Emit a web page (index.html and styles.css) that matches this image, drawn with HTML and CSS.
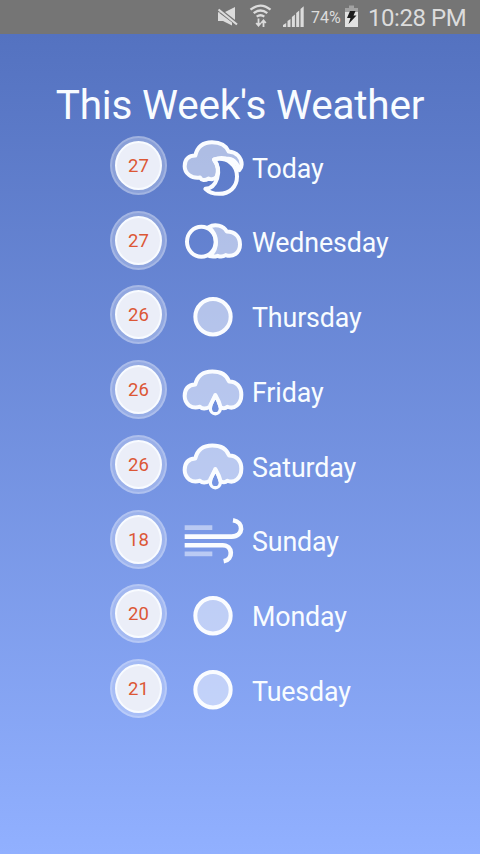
FILE: index.html
```html
<!DOCTYPE html>
<html lang="en">
<head>
<meta charset="utf-8">
<title>This Week's Weather</title>
<link rel="stylesheet" href="styles.css">
</head>
<body>
<header class="status">
  <svg class="status-icons" viewBox="0 0 110 33" width="110" height="33">
    <g fill="#dcdcdc">
      <path d="M2 12h7l10-5v15.500L6 13z"/><path d="M2 12v9h5l9 4.500v-3z"/>
      <path d="M2 8.500L21.500 24" stroke="#757575" stroke-width="3.500"/>
      <path d="M2.500 9.500L21 24.500" stroke="#dcdcdc" stroke-width="2.200"/>
      <path d="M67 27v-2l3.200-2v4zM71.500 27v-6l3-2v8zM75.900 27v-10l3-2.500V27zM80.200 27V13l3-2.500V27zM84.500 27V9l3.200-2.700V27z"/>
    </g>
    <g fill="none" stroke="#dcdcdc" stroke-width="2.300">
      <path d="M34.500 9.700Q44.500 1.500 54.500 9.700M37.700 13.200Q44.500 7.800 51.300 13.200M40.700 16.700Q44.500 13.800 48.300 16.700"/>
      <path d="M42.500 18.500v7M40.200 23l2.300 2.700 2.300-2.700M47.500 27v-6.500M45.200 23l2.300-2.700 2.300 2.700" stroke-width="1.800"/>
    </g>
  </svg>
  <span class="percent">74%</span>
  <svg class="battery" viewBox="0 0 14 33" width="14" height="33">
    <path d="M1 8.500h13V27H1z" fill="#e2e2e2"/><path d="M5 5.500h5v2.500h4v4H1V8h4z" fill="#a2a2a2"/>
    <path d="M6 11h5.500l-2 4.500h3L4.500 24l2-6H3z" fill="#1c1c1c"/>
  </svg>
  <span class="clock">10:28 PM</span>
</header>
<svg class="defs" width="0" height="0">
  <symbol id="cloud-moon" viewBox="243 1.500 192 210">
    <path class="shape" d="M326 144Q308 155 300 141C274 145 254 128 254 107C254 86 267 75 286 75C292 48 310 35 336 35C362 35 379 46 386 63C410 65 425 81 425 102Q425 112 418 119Q409 84 378 84Q360 80 342 87Q360 113 350 139Q341 150 326 144Z"/>
    <path class="outline" d="M342 87C382 78 411 104 411 138C411 170 388 190 357 190C341 190 326 185 316 175C350 173 368 122 342 87Z"/>
  </symbol>
  <symbol id="cloud-circle" viewBox="243 0.600 192 210">
    <path class="shape" d="M326 67C344 56 371 62 380 80C405 80 420 96 420 119C420 146 397 158 377 151Q366 158 353 153Q341 157 328 154Q348 138 348 112Q348 86 326 67Z"/>
    <ellipse class="outline" cx="304" cy="111" rx="43" ry="45"/>
  </symbol>
  <symbol id="sun" viewBox="243 -0.300 192 210">
    <circle class="shape" cx="339" cy="110" r="53"/>
  </symbol>
  <symbol id="rain" viewBox="243 -1.200 192 210">
    <path class="shape" d="M330 154Q310 165 300 154C276 163 254 146 254 122C254 100 266 88 286 87C292 60 311 48 337 48C362 48 380 57 387 78C410 78 424 94 424 118C424 147 402 163 382 154Q374 162 362 156Q358 139 346 119Q339 134 331 149Z"/>
    <path class="outline drop" d="M346 120Q361 149 361 159A15 16 0 0 1 331 159Q331 148 346 120Z"/>
  </symbol>
  <symbol id="wind" viewBox="243 -2.700 192 210">
    <path class="gust faint" d="M254 68H337M254 147H337"/>
    <path class="gust" d="M254 95H395C431 95 433 51 399 46M254 121H368C399 121 401 164 371 169"/>
  </symbol>
</svg>
<main class="screen">
  <h1>This Week's Weather</h1>
  <ul class="days">
    <li><span class="badge"><b>27</b></span><svg class="icon"><use href="#cloud-moon"/></svg><span class="day">Today</span></li>
    <li><span class="badge"><b>27</b></span><svg class="icon"><use href="#cloud-circle"/></svg><span class="day">Wednesday</span></li>
    <li><span class="badge"><b>26</b></span><svg class="icon"><use href="#sun"/></svg><span class="day">Thursday</span></li>
    <li><span class="badge"><b>26</b></span><svg class="icon"><use href="#rain"/></svg><span class="day">Friday</span></li>
    <li><span class="badge"><b>26</b></span><svg class="icon"><use href="#rain"/></svg><span class="day">Saturday</span></li>
    <li><span class="badge"><b>18</b></span><svg class="icon"><use href="#wind"/></svg><span class="day">Sunday</span></li>
    <li><span class="badge"><b>20</b></span><svg class="icon"><use href="#sun"/></svg><span class="day">Monday</span></li>
    <li><span class="badge"><b>21</b></span><svg class="icon"><use href="#sun"/></svg><span class="day">Tuesday</span></li>
  </ul>
</main>
</body>
</html>
```
FILE: styles.css
```css
* { box-sizing: border-box; }
body {
  margin: 0;
  height: 854px;
  display: flex;
  flex-direction: column;
  overflow: hidden;
  font-family: Roboto, "Liberation Sans", sans-serif;
  color: #f8fcff;
}
.status {
  height: 33.500px;
  flex: none;
  display: flex;
  align-items: center;
  padding-left: 216px;
  background: #757575;
  color: #dcdcdc;
}
.status-icons { margin-right: -15px; flex: none; }
.percent { width: 33px; font-size: 16px; line-height: 33px; padding-top: 2px; }
.battery { flex: none; margin: 0 10px 0 0; }
.percent, .clock { white-space: nowrap; }
.clock { font-size: 24px; letter-spacing: -.450px; line-height: 33px; padding-top: 3px; }
.defs { display: block; flex: none; position: absolute; }
.screen {
  flex: 1;
  background: linear-gradient(#5472c0, #91b0ff);
}
h1 {
  margin: 0;
  padding-top: 47px;
  height: 94.700px;
  font-size: 40.500px;
  letter-spacing: -.180px;
  line-height: 48px;
  font-weight: 400;
  text-align: center;
  white-space: nowrap;
}
.days { list-style: none; margin: 0; padding: 0 0 0 110px; }
.days li { height: 74.710px; display: flex; align-items: center; }
.badge {
  width: 57px;
  height: 59px;
  flex: none;
  display: flex;
  align-items: center;
  justify-content: center;
  border-radius: 50%;
  background: rgba(255, 255, 255, .28);
  border: 2px solid rgba(255, 255, 255, .2);
}
.badge b {
  width: 47px;
  height: 49px;
  border-radius: 50%;
  border: 2px solid #f8fbff;
  background: #ebeef8;
  color: #dc5736;
  font-size: 18.500px;
  font-weight: 400;
  line-height: 46px;
  text-align: center;
}
.icon { width: 64px; height: 70px; margin-left: 14px; flex: none; }
.shape, .outline { stroke: #fafcff; stroke-width: 12; stroke-linejoin: round; fill: none; }
.shape { fill: rgba(255, 255, 255, .5); }
.drop { stroke-width: 10; }
.gust { fill: none; stroke: #fafcff; stroke-width: 14; }
.faint { opacity: .5; }
.day { margin-left: 7px; font-size: 26.800px; letter-spacing: -.120px; line-height: 32px; padding-top: 6.500px; white-space: nowrap; }
```
